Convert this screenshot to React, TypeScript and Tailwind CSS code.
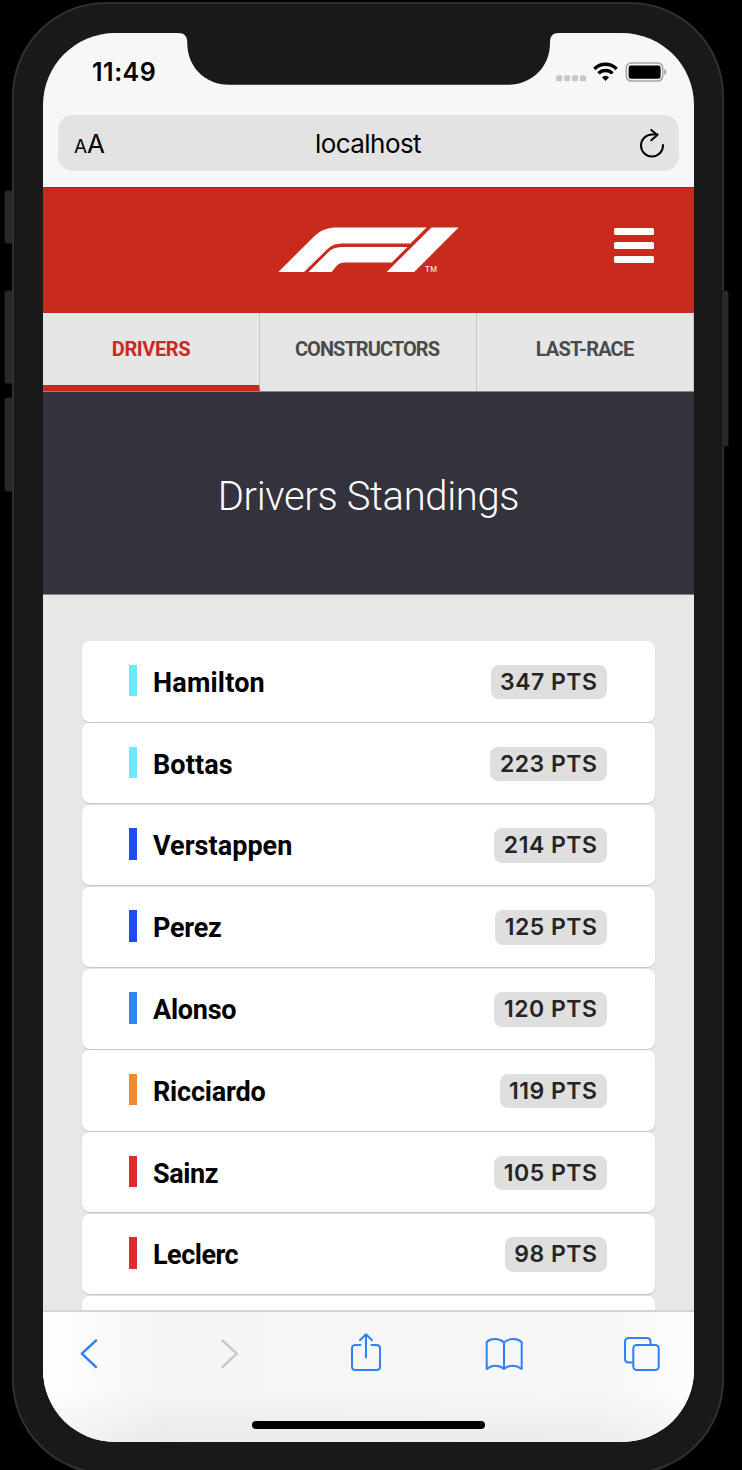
type Driver = { name: string; points: number; color: string; tracking: string };

const drivers: Driver[] = [
  { name: "Hamilton", points: 347, color: "bg-[#6ee8fc]", tracking: "tracking-[0.2px]" },
  { name: "Bottas", points: 223, color: "bg-[#6ee8fc]", tracking: "tracking-[0.1px]" },
  { name: "Verstappen", points: 214, color: "bg-[#2149f5]", tracking: "tracking-[0.03px]" },
  { name: "Perez", points: 125, color: "bg-[#2149f5]", tracking: "tracking-[-0.25px]" },
  { name: "Alonso", points: 120, color: "bg-[#3284f0]", tracking: "tracking-[-0.25px]" },
  { name: "Ricciardo", points: 119, color: "bg-[#ee8a33]", tracking: "tracking-[-0.2px]" },
  { name: "Sainz", points: 105, color: "bg-[#dc3030]", tracking: "tracking-[-0.4px]" },
  { name: "Leclerc", points: 98, color: "bg-[#dc3030]", tracking: "tracking-[-0.5px]" },
];

function StatusBar() {
  return (
    <div className="flex h-[82px] shrink-0 items-start justify-between pl-[49px] pr-[27px] pt-[24px]">
      <span className="text-[25px] leading-[31px] font-semibold tracking-[0.5px] text-black">11:49</span>
      <div className="flex h-[31px] items-center">
        <svg width="111" height="22" viewBox="0 0 111 22">
          <g fill="#c6c6c6">
            <rect x="0.3" y="13.3" width="6" height="6" rx="1.5" />
            <rect x="8.2" y="13.3" width="6" height="6" rx="1.5" />
            <rect x="16.1" y="13.3" width="6" height="6" rx="1.5" />
            <rect x="24" y="13.3" width="6" height="6" rx="1.5" />
          </g>
          <g fill="none" stroke="#000" strokeWidth="3.5">
            <path d="M38.400 7a15.600 15.600 0 0 1 22.200 0" />
            <path d="M42.500 11.400a9.800 9.800 0 0 1 14 0" />
          </g>
          <path d="M45.900 15.300a5.400 5.400 0 0 1 7.200 0L49.500 19z" fill="#000" />
          <rect x="70.300" y="1.100" width="36.400" height="18" rx="5" fill="none" stroke="#a3a3a3" strokeWidth="1.500" />
          <rect x="72.600" y="3.400" width="32" height="13.400" rx="2.400" fill="#000" />
          <path d="M108.400 7c2.700 1 2.700 5 0 6z" fill="#9b9b9b" />
        </svg>
      </div>
    </div>
  );
}

function AddressBar() {
  return (
    <div className="mx-[15px] mb-4 flex h-14 shrink-0 items-center justify-between rounded-[15px] bg-[#e3e3e4] pl-4 pr-[14px] text-black">
      <div className="flex w-10 items-baseline pt-[2px]">
        <span className="text-[19px] leading-none">A</span>
        <span className="text-[26px] leading-none">A</span>
      </div>
      <span className="mr-[3px] text-[26px] tracking-[-0.55px]">localhost</span>
      <div className="flex w-10 justify-end">
        <svg width="26" height="30" viewBox="0 0 26 30" fill="none" stroke="#000" strokeWidth="2" strokeLinecap="round" strokeLinejoin="round">
          <path d="M24 17A11 11 0 1 1 13 6.500H18.500" />
          <path d="M12.300 1.900l6 5-6 5.400" />
        </svg>
      </div>
    </div>
  );
}

function Logo() {
  return (
    <svg width="182" height="48" viewBox="278 226 182 48" fill="#fff">
      <path d="M278.300 272L313 237.500C320.500 230 327 227.500 338 227.500H426.500L410.500 243.600H344C335 243.600 331 245.500 326 250.500L304 272z" />
      <path d="M308.500 272L328.500 252C333 247.800 337 247 345 247H407.500L391.800 262.400H346C341 262.400 339.500 263 336.500 266L331.500 272z" />
      <path d="M386.700 272L431.500 227.500H458.600L414.200 272z" />
      <text x="425" y="272" fontSize="7.500" fontFamily="Inter, sans-serif" textLength="12">TM</text>
    </svg>
  );
}

function Header() {
  return (
    <header className="grid h-[126px] shrink-0 grid-cols-[1fr_182px_1fr] border-t border-[#8c2d27] bg-[#c92a1e] pt-[38px]">
      <span />
      <Logo />
      <button className="mt-[2px] mr-10 flex h-9 w-[40.500px] flex-col gap-[7.500px] justify-self-end" aria-label="Menu">
        <span className="h-[6.600px] w-full rounded-[1.500px] bg-white" />
        <span className="h-[6.600px] w-full rounded-[1.500px] bg-white" />
        <span className="h-[6.600px] w-full rounded-[1.500px] bg-white" />
      </button>
    </header>
  );
}

function Tabs() {
  return (
    <nav className="grid h-[78px] shrink-0 grid-cols-3 bg-[#e6e6e6] font-[Roboto,sans-serif] text-[20px] leading-[24px] font-bold text-[#4b4b4b]">
      <div className="border-r-[1.500px] border-b-[6px] border-r-[#c6c6c6] border-b-[#c92a1e] pt-[24px] text-center tracking-[-0.4px] text-[#c92a1e]">DRIVERS</div>
      <div className="border-r border-[#c6c6c6] pt-[24px] pr-[2px] text-center tracking-[-0.95px]">CONSTRUCTORS</div>
      <div className="border-r border-[#c6c6c6] pt-[24px] pr-[1px] text-center tracking-[-0.8px]">LAST-RACE</div>
    </nav>
  );
}

function DriverRow({ driver }: { driver: Driver }) {
  return (
    <li className="flex h-[80.300px] shrink-0 items-start justify-between rounded-[8px] bg-white pl-[47px] pr-[48px] pt-[23.500px] shadow-[0_1px_1px_rgba(0,0,0,0.16)]">
      <div className="flex items-start">
        <span className={`h-[31.500px] w-2 ${driver.color}`} />
        <span className={`ml-4 font-[Roboto,sans-serif] text-[27px] leading-[37px] font-bold text-black ${driver.tracking}`}>{driver.name}</span>
      </div>
      <span className="h-[34.500px] rounded-[8px] bg-[#dfdfdf] px-[9.500px] text-[23px] leading-[35px] font-semibold tracking-[0.5px] text-[#252525]">{driver.points} PTS</span>
    </li>
  );
}

function Standings() {
  return (
    <main className="flex min-h-0 flex-1 flex-col overflow-hidden bg-[#e7e7e7]">
      <div className="flex h-[204px] shrink-0 items-center justify-center border-y border-[#85858c] bg-[#34333d] pt-[8px]">
        <h1 className="font-[Roboto,sans-serif] text-[40px] leading-[48px] font-light tracking-[-0.35px] text-white">Drivers Standings</h1>
      </div>
      <ul className="mx-[39px] flex flex-col gap-[1.500px] pt-[46.400px]">
        {drivers.map((driver) => (
          <DriverRow key={driver.name} driver={driver} />
        ))}
        <li className="h-20 shrink-0 rounded-[8px] bg-white" />
      </ul>
    </main>
  );
}

function Toolbar() {
  return (
    <footer className="flex h-[132px] shrink-0 flex-col items-center border-t-2 border-[#d4d4d4] bg-[linear-gradient(to_bottom,transparent_60%,rgba(0,0,0,0.045)),linear-gradient(to_right,#fff,#f5f5f4_18%,#f7f7f7_85%,#fdfdfd)]">
      <div className="h-[109px] w-full">
        <svg width="651" height="90" viewBox="43 1312 651 90" fill="none" stroke="#2f80f7" strokeWidth="2" strokeLinecap="round" strokeLinejoin="round">
          <path d="M96 1340.500L81.800 1353.700L96 1367" strokeWidth="2.400" />
          <path d="M222.500 1340.500L236.700 1353.700L222.500 1367" stroke="#c9c9c9" strokeWidth="2.400" />
          <path d="M360.500 1345H355.500Q352 1345 352 1348.500V1366.500Q352 1370 355.500 1370H376.500Q380 1370 380 1366.500V1348.500Q380 1345 376.500 1345H371.500" />
          <path d="M366 1357.500V1334.500M360 1340.300L366 1334.300L372 1340.300" />
          <path d="M504 1342.500C499 1338 491 1338 486.700 1342V1369C492 1364.800 499 1364.800 504 1369C509 1364.800 516 1364.800 521.700 1369V1342C517 1338 509 1338 504 1342.500V1369" />
          <path d="M632.500 1362.500H629Q625 1362.500 625 1358.500V1342Q625 1338 629 1338H646.500Q650.500 1338 650.500 1342V1345" />
          <rect x="633.300" y="1345" width="25.400" height="25" rx="3.500" />
        </svg>
      </div>
      <div className="h-2 w-[233px] rounded-full bg-black" />
    </footer>
  );
}

export default function App() {
  return (
    <div className="relative h-[1470px] w-[742px] overflow-hidden bg-black font-[Inter,sans-serif]">
      <span className="absolute top-[190px] left-[4px] h-[54px] w-[12px] rounded-[3px] border border-[#111] bg-[#292929]" />
      <span className="absolute top-[290px] left-[4px] h-[94px] w-[12px] rounded-[3px] border border-[#111] bg-[#292929]" />
      <span className="absolute top-[397px] left-[4px] h-[95px] w-[12px] rounded-[3px] border border-[#111] bg-[#292929]" />
      <div className="relative ml-[12px] w-[712px] pt-[2px]">
        <div className="h-[1472px] rounded-[94px] border-2 border-[#303030] bg-[#191919] px-[29px] pt-[29px]">
          <div className="flex h-[1409px] w-[651px] flex-col overflow-hidden rounded-[72px] bg-[#f7f7f7]">
            <StatusBar />
            <AddressBar />
            <Header />
            <Tabs />
            <Standings />
            <Toolbar />
          </div>
        </div>
      </div>
      <svg className="absolute top-[32px] left-[178px]" width="382" height="53" viewBox="178 32 382 53" fill="#191919">
        <path d="M178 32V33C184.500 33 187.300 36 187.300 43C187.300 67 205 84.700 229 84.700H508C532 84.700 550 67 550 43C550 36 552.500 33 559 33V32z" />
      </svg>
      <span className="absolute top-[290px] left-[721px] h-[157px] w-[8px] rounded-[3px] border border-[#111] bg-[#292929]" />
    </div>
  );
}
